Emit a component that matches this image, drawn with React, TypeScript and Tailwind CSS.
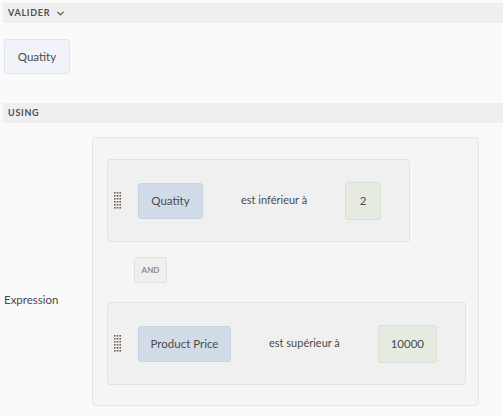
import { ChevronDown } from 'lucide-react';

function Grip() {
  const rows = [1, 4, 7, 10, 13, 16];
  return (
    <svg width="7" height="17" viewBox="0 0 7 17" className="shrink-0">
      {rows.map((y) => (
        <g key={y} fill="#6e6257">
          <rect x="0" y={y - 1} width="1.6" height="1.6" />
          <rect x="2.7" y={y - 1} width="1.6" height="1.6" />
          <rect x="5.4" y={y - 1} width="1.6" height="1.6" />
        </g>
      ))}
    </svg>
  );
}

interface ConditionProps {
  field: string;
  fieldWidth: string;
  op: string;
  value: string;
  valueWidth: string;
}

function Condition({ field, fieldWidth, op, value, valueWidth }: ConditionProps) {
  return (
    <div className="flex h-[83px] w-fit items-center rounded-[3px] border border-[#e2e2e2] bg-[#f0f0f0] pl-[6px] pr-[28px]">
      <Grip />
      <div
        className={`ml-[17px] flex h-[36px] items-center justify-center whitespace-nowrap rounded-[3px] border border-[#c8d3e2] bg-[#d2dce9] text-[11.5px] text-[#4a4a4a] ${fieldWidth}`}
      >
        {field}
      </div>
      <div className="mx-[38px] whitespace-nowrap text-[11px] text-[#4a4a4a]">{op}</div>
      <div
        className={`flex h-[38px] items-center justify-center rounded-[3px] border border-[#d8dfd3] bg-[#e5ebe1] text-[11.5px] text-[#4a4a4a] ${valueWidth}`}
      >
        {value}
      </div>
    </div>
  );
}

export default function App() {
  return (
    <div
      className="h-[416px] w-full bg-[#fafafa] pt-[3px]"
      style={{ fontFamily: 'Lato, "Open Sans", sans-serif' }}
    >
      <div className="ml-[3px] flex h-[20px] items-center gap-[5px] bg-[#efefef] px-[5px]">
        <span className="text-[9px] font-bold tracking-[0.08em] text-[#4e4e4e]">VALIDER</span>
        <ChevronDown className="h-[11px] w-[11px] text-[#4e4e4e]" strokeWidth={2.5} />
      </div>

      <div className="ml-[4px] mt-[16px] flex h-[35px] w-[66px] items-center justify-center rounded-[3px] border border-[#dfe5ee] bg-[#f0f4f9] text-[11.5px] text-[#4a4a4a]">
        Quatity
      </div>

      <div className="ml-[3px] mt-[29px] flex h-[20px] items-center bg-[#efefef] px-[5px]">
        <span className="text-[9px] font-bold tracking-[0.08em] text-[#4e4e4e]">USING</span>
      </div>

      <div className="mt-[14px] flex">
        <div className="ml-[4px] mt-[154px] w-[88px] text-[11.5px] text-[#4a4a4a]">Expression</div>
        <div className="flex h-[269px] w-[387px] flex-col rounded-[4px] border border-[#e6e6e6] bg-[#f5f5f5] pl-[14px] pt-[21px]">
          <Condition field="Quatity" fieldWidth="w-[65px]" op="est inférieur à" value="2" valueWidth="w-[36px]" />
          <div className="ml-[27px] mt-[15px] flex h-[26px] w-[33px] items-center justify-center rounded-[3px] border border-[#e2e2e2] bg-[#efefef] text-[8px] font-bold text-[#8c8c8c]">
            AND
          </div>
          <div className="mt-[19px]">
            <Condition
              field="Product Price"
              fieldWidth="w-[93px]"
              op="est supérieur à"
              value="10000"
              valueWidth="w-[59px]"
            />
          </div>
        </div>
      </div>
    </div>
  );
}
